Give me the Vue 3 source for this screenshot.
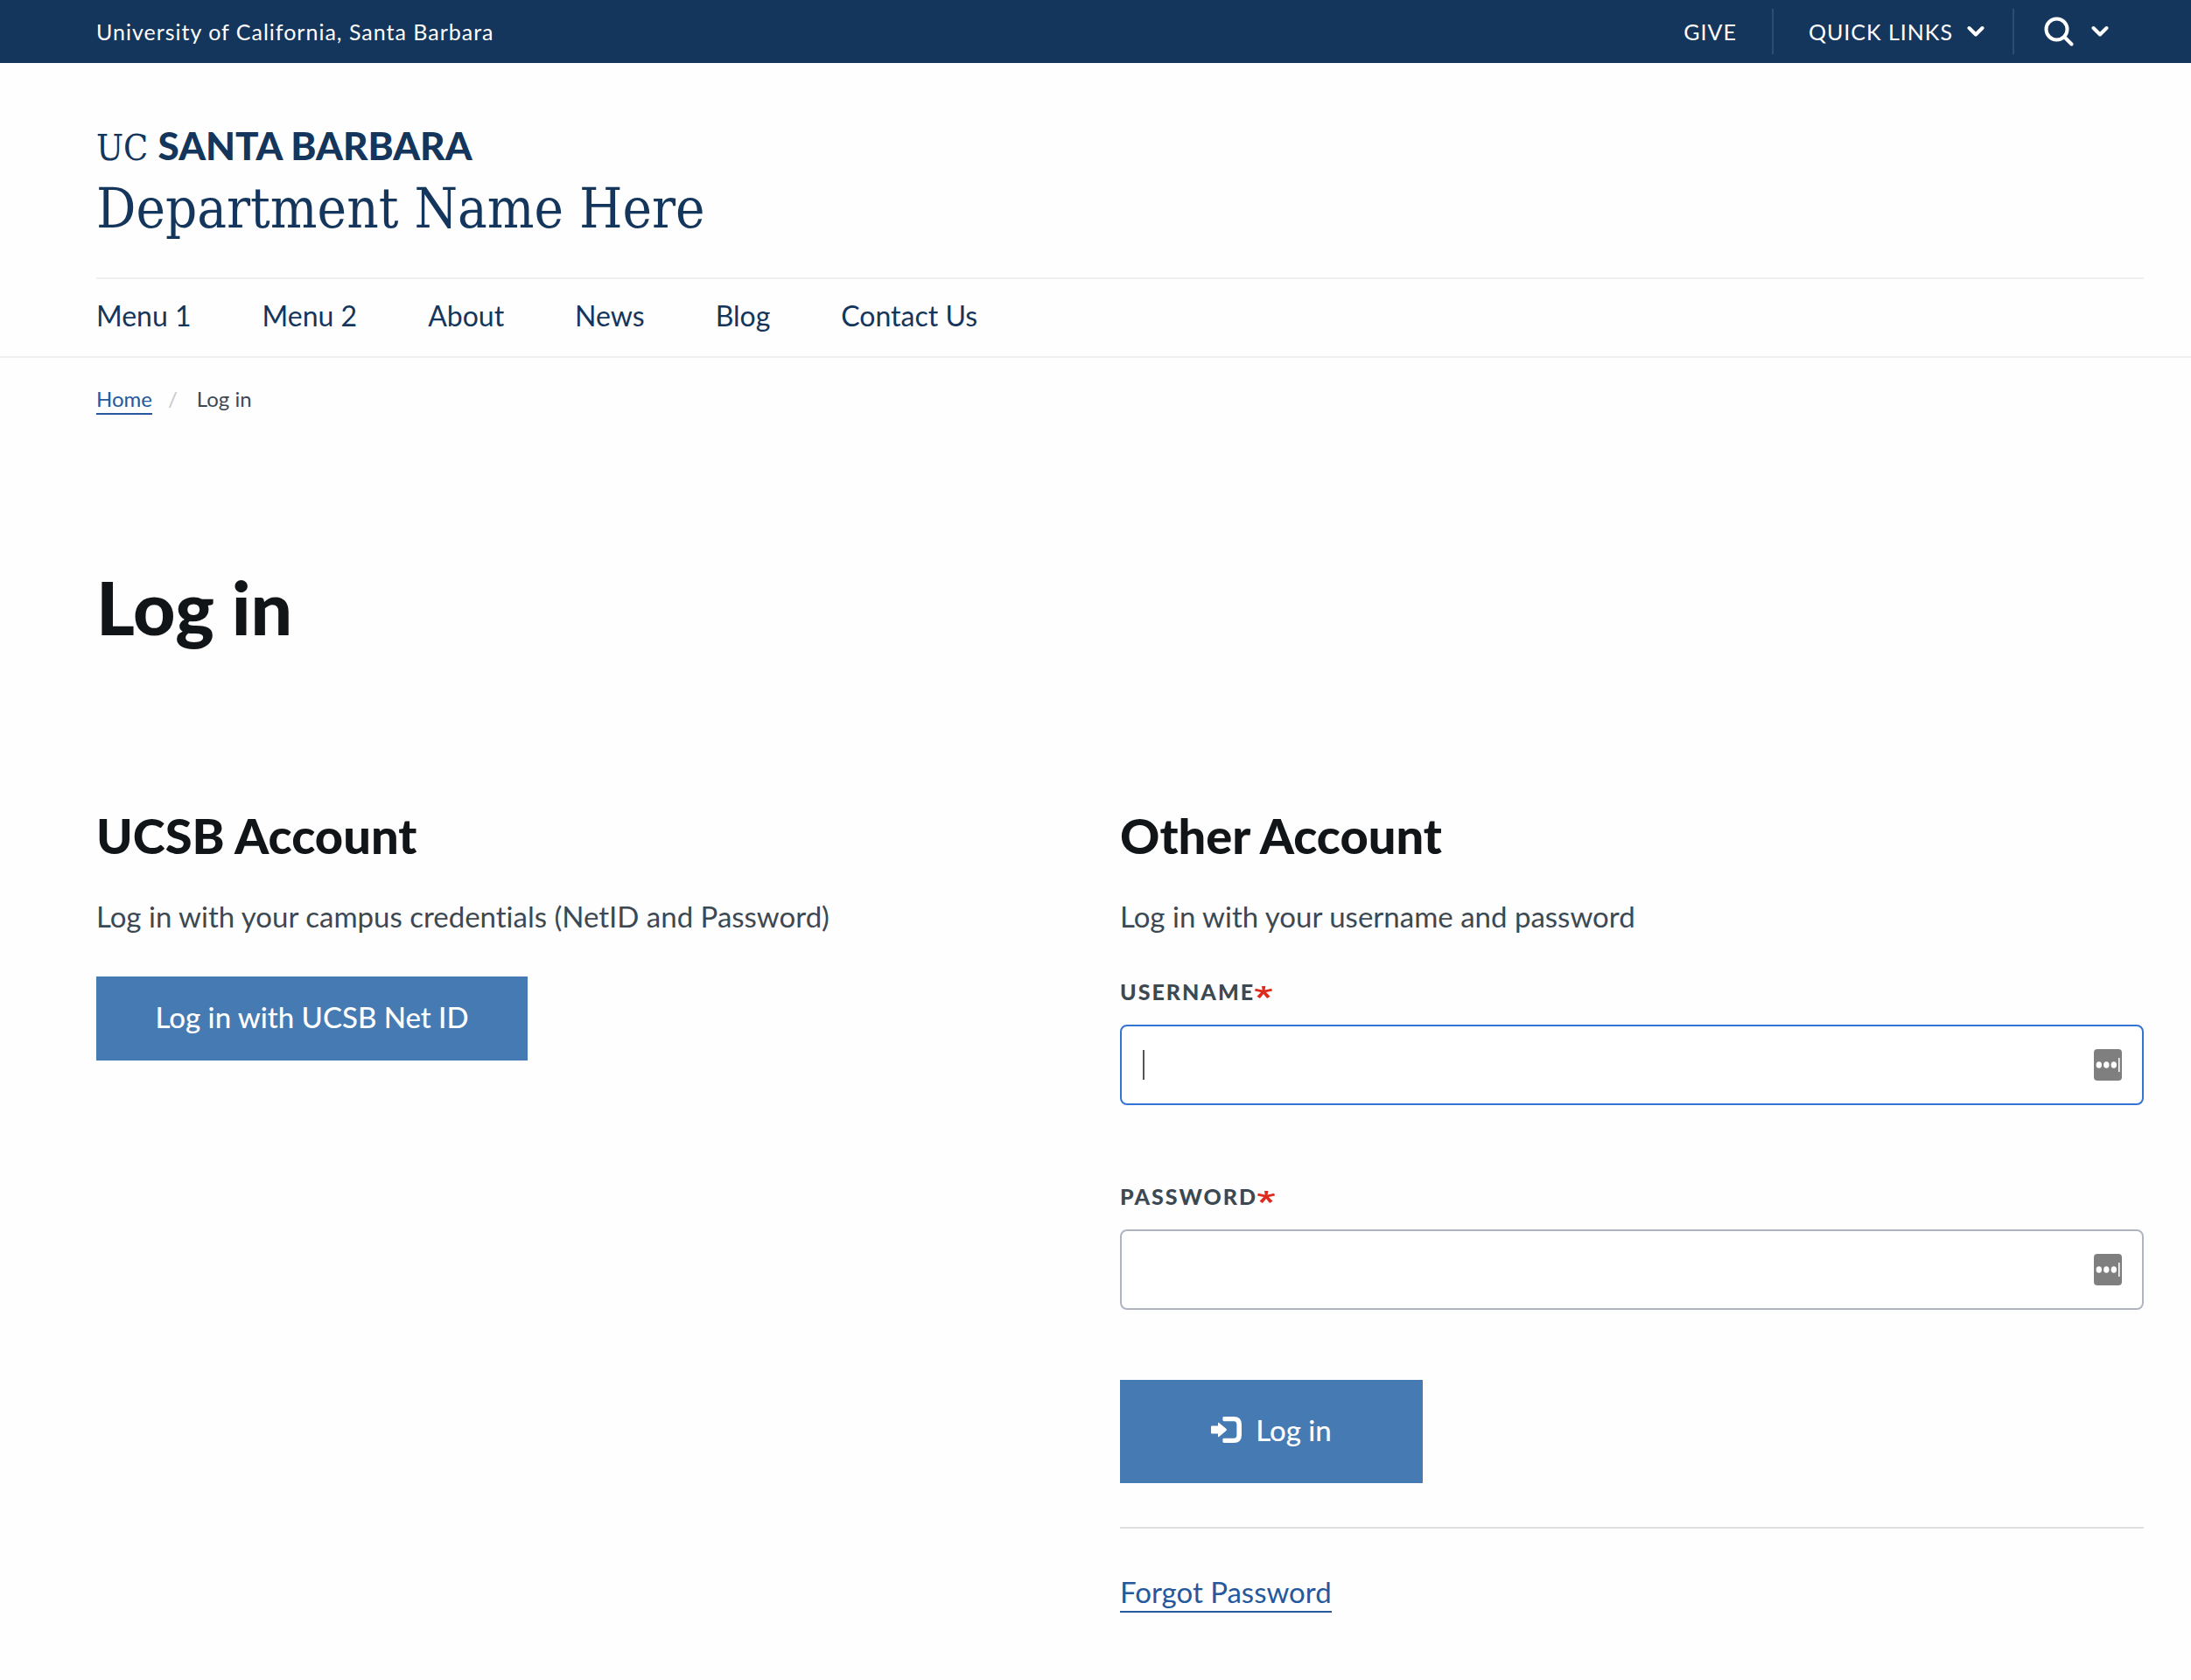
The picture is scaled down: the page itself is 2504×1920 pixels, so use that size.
<script setup>
import { ref } from 'vue'

const menu = ['Menu 1', 'Menu 2', 'About', 'News', 'Blog', 'Contact Us']
const fields = ref([
  { id: 'username', label: 'Username', type: 'text', value: '', active: true },
  { id: 'password', label: 'Password', type: 'password', value: '', active: false },
])
</script>

<template>
  <div class="page">
    <div class="topbar">
      <a class="campus" href="#">University of California, Santa Barbara</a>
      <div class="tools">
        <a class="tool give" href="#">GIVE</a>
        <button class="tool quick" type="button">
          QUICK LINKS
          <svg class="chevron" viewBox="0 0 20 14" aria-hidden="true"><path d="M2.5 3 10 10.5 17.5 3" /></svg>
        </button>
        <button class="tool search" type="button" aria-label="Search">
          <svg class="glass" viewBox="0 0 34 34" aria-hidden="true">
            <circle cx="14.5" cy="14.5" r="12" />
            <path d="m23.5 23.5 8 8" />
          </svg>
          <svg class="chevron" viewBox="0 0 20 14" aria-hidden="true"><path d="M2.5 3 10 10.5 17.5 3" /></svg>
        </button>
      </div>
    </div>

    <header class="header">
      <div class="brand">
        <a class="wordmark" href="#"><span class="uc">UC</span> <span class="sb">SANTA BARBARA</span></a>
        <a class="department" href="#">Department Name Here</a>
      </div>
      <nav class="menu">
        <a v-for="item in menu" :key="item" href="#">{{ item }}</a>
      </nav>
    </header>

    <nav class="breadcrumb" aria-label="Breadcrumb">
      <a href="#">Home</a><span class="slash">/</span><span>Log in</span>
    </nav>

    <main class="main">
      <h1>Log in</h1>
      <div class="columns">
        <section>
          <h2>UCSB Account</h2>
          <p>Log in with your campus credentials (NetID and Password)</p>
          <button class="btn netid" type="button">Log in with UCSB Net ID</button>
        </section>

        <section>
          <h2>Other Account</h2>
          <p>Log in with your username and password</p>
          <form @submit.prevent>
            <div v-for="f in fields" :key="f.id" class="field">
              <label :for="f.id">{{ f.label }}<svg class="star" viewBox="0 0 20 14" aria-hidden="true"><path d="M8 0h4.400l-.8 4.600 7.600-1.800.8 2.700-7.100 1.600 4.600 4.700-3.400 2.200L10 8.900l-4.100 5.100-3.400-2.200 4.600-4.700L0 5.500l.8-2.700 7.900 1.800z" /></svg></label>
              <div class="box">
                <input :id="f.id" v-model="f.value" :type="f.type" :class="{ active: f.active }" required />
                <span v-if="f.active" class="caret"></span>
                <svg class="manager" viewBox="0 0 32 36" aria-hidden="true">
                  <rect width="32" height="36" rx="4" fill="#7f7f7f" />
                  <ellipse cx="5.800" cy="18" rx="3.200" ry="3.800" />
                  <ellipse cx="14.300" cy="18" rx="3.200" ry="3.800" />
                  <ellipse cx="22.800" cy="18" rx="3.200" ry="3.800" />
                  <rect x="28" y="10" width="1.600" height="16" />
                </svg>
              </div>
            </div>
            <button class="btn login" type="submit">
              <svg class="enter" viewBox="0 0 35 30" aria-hidden="true">
                <path d="M1.200 10.500H8V7.400q0-1.200 1.100-.4l8.400 7q1 1 0 2l-8.400 7q-1.100.8-1.100-.4v-3.100H1.200Q0 19.500 0 18.300v-6.600q0-1.200 1.200-1.200z" />
                <path d="M14.800 0H26q9 0 9 9v12q0 9-9 9H14.800q-1.400 0-1.400-1.400v-2.400q0-1.400 1.400-1.400H26q3.400 0 3.400-3.800V9q0-3.800-3.400-3.800H14.800q-1.400 0-1.400-1.400V1.400Q13.400 0 14.800 0z" />
              </svg>
              Log in
            </button>
          </form>
          <hr />
          <a class="forgot" href="#">Forgot Password</a>
        </section>
      </div>
    </main>
  </div>
</template>

<style>
body {
  margin: 0;
  background: #fefefe;
}
</style>

<style scoped>
.page {
  font-family: Lato, "Open Sans", sans-serif;
  font-size: 33px;
  line-height: 48px;
  font-variant-ligatures: none;
  color: #3d4952;
  padding-bottom: 78px;
}
a {
  color: inherit;
  text-decoration: none;
}
button {
  font: inherit;
  border: 0;
  padding: 0;
  color: #fff;
  background: none;
  cursor: pointer;
}
svg {
  display: block;
  flex: none;
}
.topbar {
  display: flex;
  justify-content: space-between;
  align-items: center;
  height: 72px;
  padding: 0 54px 0 110px;
  background: #14365c;
  color: #fff;
  font-size: 25px;
  letter-spacing: 1px;
  white-space: nowrap;
}
.tools {
  display: flex;
}
.tool {
  display: flex;
  align-items: center;
  height: 52px;
}
.give {
  padding-right: 40px;
}
.quick,
.search {
  gap: 20px;
  border-left: 2px solid #2e4d70;
}
.quick {
  gap: 16px;
  padding: 0 32px 0 40px;
  letter-spacing: 1px;
}
.search {
  padding: 0 40px 0 34px;
}
.chevron,
.glass {
  fill: none;
  stroke: #fff;
  stroke-width: 4;
  stroke-linecap: round;
  stroke-linejoin: round;
}
.chevron {
  width: 20px;
  height: 14px;
}
.glass {
  width: 34px;
  height: 34px;
}
.header {
  padding: 70px 54px 0 110px;
  border-bottom: 2px solid #eeeff0;
  color: #14365c;
}
.brand {
  display: flex;
  flex-direction: column;
  align-items: flex-start;
  gap: 10px;
  padding-bottom: 42px;
}
.wordmark {
  font-size: 44px;
}
.uc {
  font-family: "DejaVu Serif Condensed", "DejaVu Serif", serif;
  font-size: 41px;
}
.sb {
  font-weight: 900;
}
.department {
  font-family: "DejaVu Serif Condensed", "DejaVu Serif", serif;
  font-size: 63px;
  line-height: 72px;
}
.menu {
  display: flex;
  gap: 81px;
  padding: 18px 0 22px;
  border-top: 2px solid #eeeff0;
  font-size: 32px;
}
.breadcrumb {
  display: flex;
  padding: 31px 54px 0 110px;
  font-size: 24px;
  line-height: 32px;
}
.breadcrumb a,
.forgot {
  color: #24599e;
  border-bottom: 2px solid #24599e;
}
.slash {
  padding: 0 22px 0 18px;
  color: #c8c8c8;
}
.main {
  padding: 172px 54px 0 110px;
}
h1,
h2 {
  margin: 0;
  font-weight: 900;
  color: #111518;
}
h1 {
  font-size: 84px;
  line-height: 96px;
}
.columns {
  display: grid;
  grid-template-columns: 1fr 1fr;
  margin-top: 181px;
}
h2 {
  font-size: 56px;
  line-height: 64px;
}
p {
  margin: 36px 0 45px;
}
.btn {
  display: flex;
  align-items: center;
  justify-content: center;
  padding-bottom: 4px;
  background: #467ab3;
  font-family: "Lato Medium", Lato, sans-serif;
  font-weight: 500;
}
.netid {
  width: 493px;
  height: 96px;
}
.field {
  margin-bottom: 87px;
}
.field:last-of-type {
  margin-bottom: 80px;
}
label {
  display: flex;
  align-items: center;
  margin-bottom: 21px;
  font-size: 25px;
  line-height: 34px;
  font-weight: 900;
  letter-spacing: 2px;
  text-transform: uppercase;
}
.star {
  width: 20px;
  height: 14px;
  padding-top: 2px;
  fill: #de2b1e;
}
.box {
  position: relative;
}
input {
  display: block;
  box-sizing: border-box;
  width: 100%;
  height: 92px;
  padding: 0 80px 0 24px;
  border: 2px solid #afb5c0;
  border-radius: 8px;
  background: #fff;
  font: inherit;
  color: inherit;
  outline: none;
}
input.active {
  border-color: #3474d4;
}
.caret {
  position: absolute;
  left: 26px;
  top: 29px;
  width: 2px;
  height: 34px;
  background: #555;
}
.manager {
  position: absolute;
  right: 25px;
  top: 28px;
  width: 32px;
  height: 36px;
  fill: #fff;
}
.login {
  gap: 16px;
  width: 346px;
  height: 118px;
}
.enter {
  width: 35px;
  height: 30px;
  fill: #fff;
}
hr {
  height: 2px;
  margin: 50px 0 48px;
  border: 0;
  background: #dedfe1;
}
.forgot {
  display: inline-block;
  line-height: 43px;
}
</style>
